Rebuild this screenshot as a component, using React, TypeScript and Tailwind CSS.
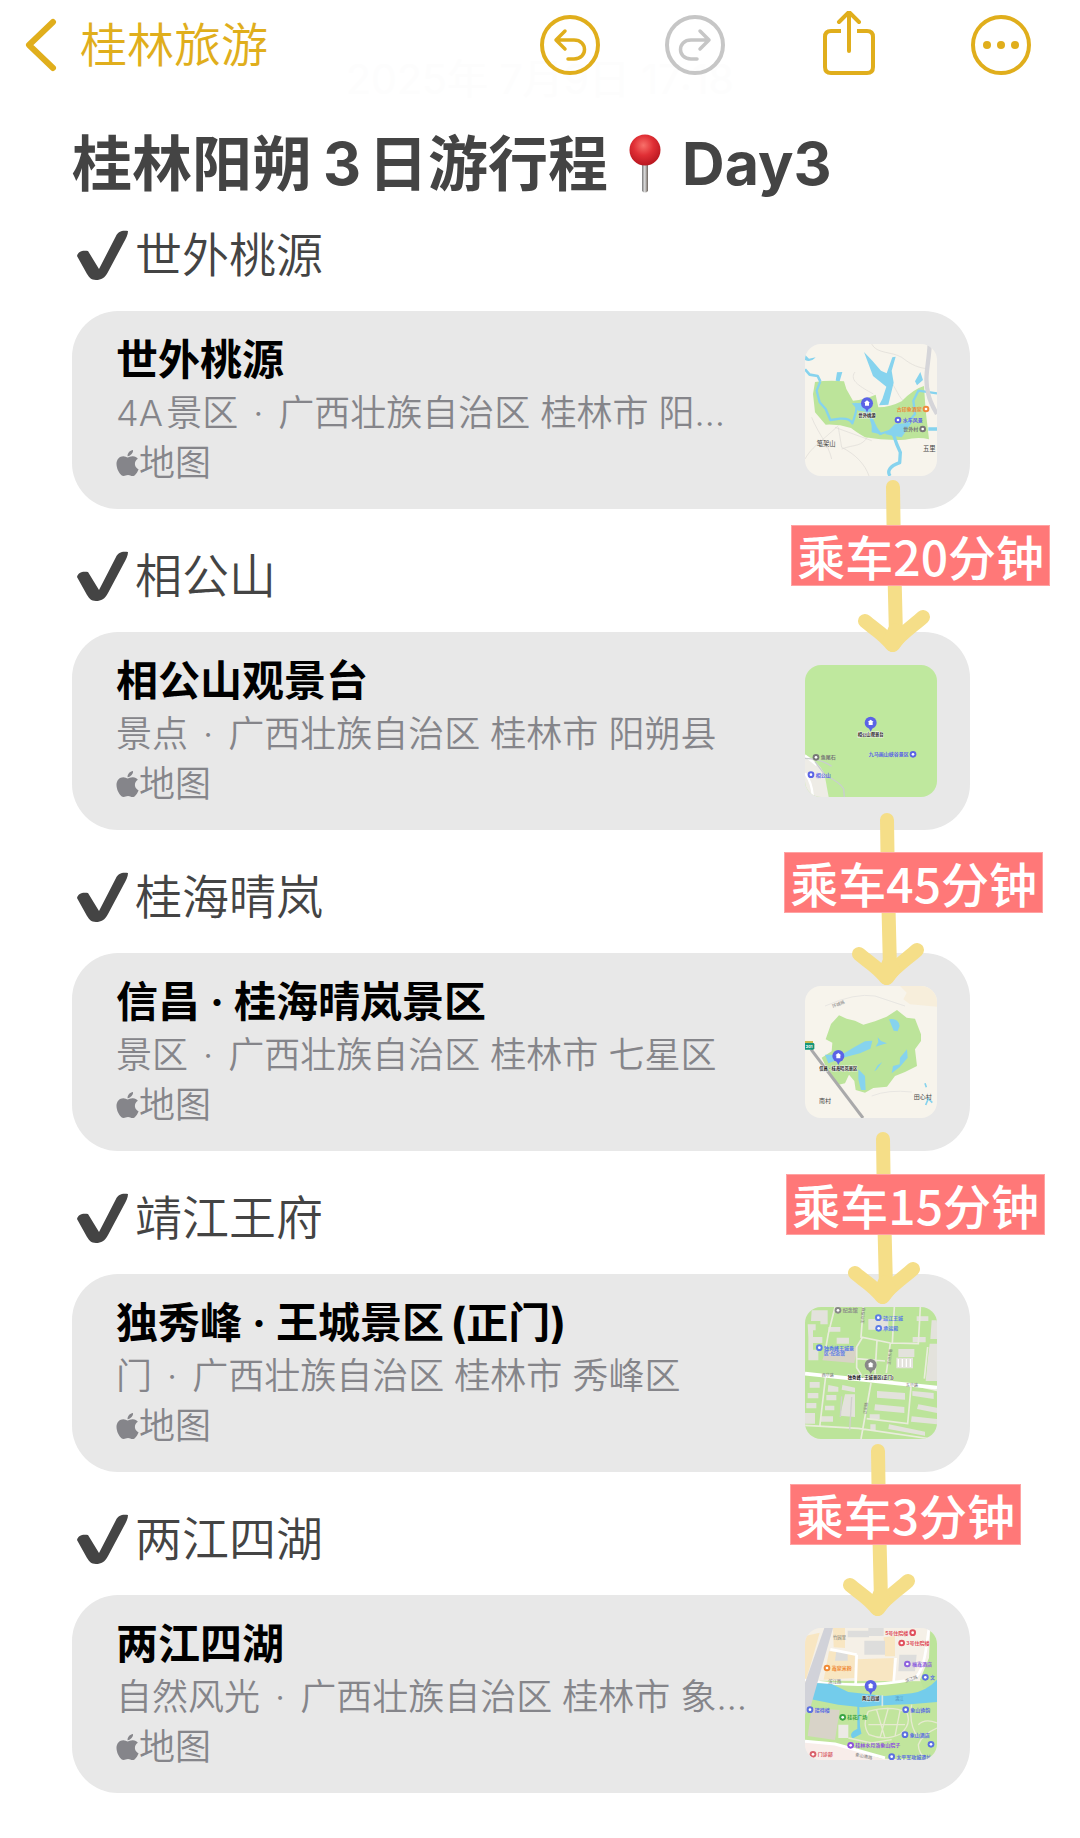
import React from "react";
import { FaApple } from "react-icons/fa";

type Stop = {
  heading: string;
  name: string;
  kind: string;
  place: string;
  map: React.ReactNode;
  ride?: { text: string; arrow: string; label: string };
};

type PinProps = {
  x: number;
  y: number;
  text: string;
  color?: string;
  left?: boolean;
};

// small round place marker with its caption
const Mark = ({ x, y, text, color, left }: PinProps) => (
  <g>
    <circle cx={x} cy={y} r="10" fill={color} />
    <circle cx={x} cy={y} r="4" fill="#fff" />
    <text
      x={left ? x - 13 : x + 14}
      y={y + 6}
      fill={color}
      fontSize="15"
      fontWeight="700"
      textAnchor={left ? "end" : "start"}
    >
      {text}
    </text>
  </g>
);

// large pin in the middle of a map
const Pin = ({ x, y, text, color = "#5b63e6" }: PinProps) => (
  <g>
    <path d={`M${x - 6} ${y + 15}L${x} ${y + 27}L${x + 6} ${y + 15}Z`} fill={color} />
    <circle cx={x} cy={y} r="18" fill={color} />
    <path
      d={`M${x - 9} ${y - 2}L${x} ${y - 9}L${x + 9} ${y - 2}H${x + 6}V${y + 7}H${x - 6}V${y - 2}Z`}
      fill="#fff"
    />
    <text
      x={x}
      y={y + 41}
      fill="#222"
      stroke="#fff"
      strokeWidth="2"
      paintOrder="stroke"
      fontSize="13"
      fontWeight="700"
      textAnchor="middle"
    >
      {text}
    </text>
  </g>
);

const MapFrame = ({ label, children }: { label: string; children: React.ReactNode }) => (
  <svg
    viewBox="0 0 396 396"
    role="img"
    aria-label={label}
    className="size-[132px] shrink-0 rounded-[16px]"
  >
    {children}
  </svg>
);

const TaoyuanMap = () => (
  <MapFrame label="世外桃源">
    <rect width="396" height="396" fill="#f7f4ec" />
    <g fill="none" stroke="#dedbd6" strokeWidth="2">
      <path d="M200 0C215 30 260 22 290 40C310 55 330 70 365 74" />
      <path d="M150 84C130 110 170 130 205 150M255 110C275 135 280 160 300 175" />
      <path d="M0 345C20 310 40 300 100 245M20 220C40 270 70 300 80 345M100 250L110 310C150 330 180 360 192 396M110 315C150 300 170 310 190 275M90 250L200 290" />
    </g>
    <path
      d="M30 114Q70 108 117 112L124 135L144 170Q180 166 212 152L220 190Q255 190 290 172Q325 135 357 126L362 200L372 286Q340 278 300 287Q240 290 180 280Q150 262 138 252Q100 240 62 242L30 205L24 150Z"
      fill="#bce49a"
    />
    <g fill="none" stroke="#86d3ee" strokeLinejoin="round">
      <path d="M0 76L14 92L38 96L46 112" strokeWidth="8" />
      <path d="M46 112L35 140L44 175L62 195L76 228L105 224Q135 222 142 238Q160 190 152 180L175 190L196 220L206 250L225 270L262 258L300 245L330 210L325 170L340 140L396 148" strokeWidth="7" />
      <path d="M262 262L275 300L286 325L284 356Q240 372 255 396" strokeWidth="10" />
      <path d="M370 255H396" strokeWidth="11" />
    </g>
    <path
      d="M177 24L202 50L228 80L245 88L262 40L272 38L260 80L266 116L250 182L222 184L232 165L244 128L204 96Z"
      fill="#86d3ee"
    />
    <path d="M0 32L12 44L32 40Q18 56 0 48ZM96 85L112 84L104 112L92 110ZM346 84L354 108L336 124L330 112ZM140 178L190 176L200 205L160 200ZM200 215L216 250L232 272L200 265ZM240 270L270 240L320 236L290 280L262 275Z" fill="#86d3ee" />
    <path d="M374 0C372 60 356 100 370 150C375 175 390 200 396 210" fill="none" stroke="#d5d5d9" strokeWidth="13" />
    <Pin x={186} y={178} text="世外桃源" />
    <Mark x={363} y={195} text="古印象酒家" color="#ef8a3c" left />
    <Mark x={279} y={228} text="水车风景" color="#5b63e6" />
    <Mark x={353} y={255} text="世外村" color="#777" left />
    <g fill="#444" fontSize="19">
      <text x="35" y="305">笔架山</text>
      <text x="354" y="322">五里</text>
    </g>
  </MapFrame>
);

const XianggongMap = () => (
  <MapFrame label="相公山观景台">
    <rect width="396" height="396" fill="#bfe89e" />
    <path d="M0 268Q40 290 58 325L71 396H0Z" fill="#eeece6" />
    <path d="M0 272L35 300M0 325Q20 350 24 396" stroke="#fff" strokeWidth="7" fill="none" />
    <path d="M0 280Q50 282 80 304M30 290L60 330Q105 352 116 372L118 396" stroke="#c9cdd0" strokeWidth="4" fill="none" />
    <Pin x={197} y={173} text="相公山观景台" />
    <Mark x={324} y={268} text="九马画山峡谷景区" color="#5b63e6" left />
    <Mark x={33} y={277} text="鱼尾石" color="#777" />
    <Mark x={18} y={329} text="相公山" color="#5b63e6" />
  </MapFrame>
);

const GuihaiMap = () => (
  <MapFrame label="桂海晴岚景区">
    <rect width="396" height="396" fill="#f7f4ec" />
    <path d="M285 0H396V62L315 55L295 40L305 20Z" fill="#f7eedb" />
    <path d="M60 60Q150 20 210 30L300 60M200 330Q250 310 320 318" fill="none" stroke="#e8e6e2" strokeWidth="3" />
    <path
      d="M102 88L125 98L150 104L175 116L210 106L245 92L276 72L305 95L330 98L348 145V165L330 190L336 240L300 258L270 270L246 302L205 306L180 320L152 312L148 285L132 266L120 292L95 298L62 240L50 215L80 196L82 170L62 160L78 114Z"
      fill="#bce49a"
    />
    <path
      d="M60 206L110 206L150 182L180 166L202 164L196 188L165 202L125 212L70 232ZM252 100Q280 95 284 120L278 136L266 134ZM218 154L228 165L246 172L230 176L212 182L220 168ZM285 215L306 190L308 215L285 242L260 262L264 240L284 235ZM232 228L214 252L208 256L218 238ZM160 250L180 270L182 312H168L160 280Z"
      fill="#86d3ee"
    />
    <path d="M18 190L174 396" stroke="#a9a9aa" strokeWidth="9" />
    <rect x="-8" y="171" width="36" height="20" rx="4" fill="#159578" />
    <rect x="-8" y="165" width="32" height="6" fill="#c8ba52" />
    <text x="2" y="186" fill="#fff" fontSize="12" fontWeight="700">201</text>
    <path d="M360 292L364 304M362 357L370 338L382 350" stroke="#86d3ee" strokeWidth="5" fill="none" />
    <Pin x={100} y={210} text="信昌 · 桂海晴岚景区" />
    <g fill="#444" fontSize="18">
      <text x="42" y="352">南村</text>
      <text x="326" y="338">田心村</text>
    </g>
    <text x="84" y="66" fill="#888" fontSize="13" transform="rotate(-22 84 66)">环城路</text>
  </MapFrame>
);

const WangfuMap = () => (
  <MapFrame label="独秀峰 · 王城景区 (正门)">
    <rect width="396" height="396" fill="#bce49a" />
    <g fill="#e3e2dc">
      <path d="M20 10H68V52H46V42H18ZM8 52H32V70H24V90H10ZM10 90H52V108H24V128H40V160H10ZM70 60H106V74H70ZM95 92H132V110H95ZM190 36H250V68H190ZM380 40H396V96H376ZM374 110H396V222H362L368 160ZM335 28H370V42H335ZM323 90H362V106H323ZM280 126H328V150H280ZM274 152H324V184H274Z" />
      <path d="M14 225H44V242H14ZM8 258H40V274H8ZM4 288H34V304H4ZM0 318H30V350H0ZM70 234L100 240V254H68ZM64 264H94V280H64ZM60 296H88V310H60ZM112 234L150 242V256L110 248ZM120 262H150V330L105 326ZM216 252L300 258V278L216 272ZM210 292L298 300V318L208 310ZM252 352L360 374V386L250 366ZM322 252L386 258V276L322 266ZM340 292L396 302V318L336 306ZM320 328L396 336V352L318 344ZM194 322H224V336H194ZM196 352H212V370H196ZM48 328H84V344H48Z" />
    </g>
    <path d="M62 130L158 120L148 168L52 160Z" fill="#d8d3c6" />
    <g fill="none" stroke="#e9ecdc" strokeWidth="5">
      <path d="M90 0L70 80L62 125M175 0L168 90L256 108L340 110L346 0M256 108L244 198M268 0L262 108M172 92L155 120V182L170 206M155 155L240 162M216 100L210 200M368 120L358 215M62 208L44 360M198 228L168 396M318 240L308 350L185 335M0 355L160 364L380 396M330 235L396 250" />
    </g>
    <path d="M0 200L396 242" stroke="#fff" strokeWidth="11" />
    <path d="M110 268L106 330M140 270L134 370" stroke="#d0d0cd" strokeWidth="4" />
    <path d="M280 156V180M292 156V180M304 156V180M316 156V180" stroke="#fff" strokeWidth="4" />
    <Mark x={99} y={10} text="纪念馆" color="#888" />
    <Mark x={220} y={32} text="靖江王城" color="#5b7be6" />
    <Mark x={221} y={64} text="承运殿" color="#5b7be6" />
    <Mark x={43} y={122} text="独秀峰王城景" color="#5b7be6" />
    <text x="57" y="143" fill="#5b7be6" fontSize="14" fontWeight="700">区-纪念馆</text>
    <Pin x={197} y={174} text="独秀峰 · 王城景区(正门)" color="#888" />
    <g fill="#777" fontSize="12">
      <text x="50" y="211">西华路</text>
      <text x="303" y="241">东华路</text>
      <text x="176" y="50" transform="rotate(-85 176 50)">王府西巷</text>
      <text x="256" y="174" transform="rotate(-83 256 174)">王府东巷</text>
      <text x="184" y="322" transform="rotate(-83 184 322)">正阳路</text>
    </g>
  </MapFrame>
);

const LakesMap = () => (
  <MapFrame label="两江四湖">
    <rect width="396" height="396" fill="#f5f0e7" />
    <g fill="#f9e3b9">
      <path d="M0 24L44 14L20 100L0 165ZM84 0H120V60L86 58ZM155 94L266 90L264 160L155 166ZM72 70L150 74L148 150L56 155ZM236 28L270 24V85H240Z" opacity=".8" />
    </g>
    <g fill="#dddddc">
      <path d="M128 8H192V28H128ZM178 38H240V80H178ZM283 80H335L330 130H280ZM94 68L128 78V98H90ZM190 0H236V24H190Z" />
    </g>
    <path d="M45 158L396 160V396L160 390L0 340V230Z" fill="#c1e59d" />
    <path d="M376 0H396V180H355L345 155L372 90Z" fill="#bce49a" />
    <path d="M0 156Q80 170 160 170T320 155Q350 145 362 70L372 0M155 80L152 168M76 64L155 80M272 90L266 160" fill="none" stroke="#fff" strokeWidth="8" />
    <path d="M32 165L80 168L130 192L240 204L320 196Q365 188 396 155V222L325 228L230 232L170 238L100 230L18 214Z" fill="#73cceb" />
    <path d="M232 202V235" stroke="#d8e8e5" strokeWidth="5" />
    <path d="M160 234L162 296L166 316L144 328Q134 316 160 304Z" fill="#73cceb" stroke="#73cceb" strokeWidth="6" />
    <path d="M58 0H84L18 232L0 260V165Z" fill="#d1d2d9" />
    <path d="M20 240L104 246L90 336L8 324Z" fill="#d8d3c8" />
    <path d="M100 290H130V330H100Z" fill="#eceae5" />
    <g fill="none" stroke="#e6ead0" strokeWidth="4">
      <path d="M190 250Q260 230 306 254Q320 290 286 318Q240 340 192 320Q170 290 190 250M190 290H300M215 246L240 330M250 240L225 330M285 248L270 325M130 330L200 345L260 335M340 290Q360 270 396 285M396 300Q350 320 340 350Q340 380 370 396M320 230Q310 290 340 330" />
    </g>
    <path d="M0 338L90 346L180 376L240 396H0Z" fill="#f8edea" />
    <path d="M0 340L90 348L240 390" fill="none" stroke="#fff" strokeWidth="9" />
    <Mark x={323} y={14} text="5号住院楼" color="#e0505d" left />
    <Mark x={290} y={45} text="3号住院楼" color="#e0505d" />
    <Mark x={307} y={108} text="福鑫酒店" color="#8e62dd" />
    <Mark x={66} y={120} text="鑫家米粉" color="#f08a35" />
    <Mark x={361} y={148} text="文" color="#5b6fe0" />
    <Mark x={15} y={245} text="接待楼" color="#5b6fe0" />
    <Mark x={302} y={245} text="象山钟韵" color="#5b6fe0" />
    <Mark x={113} y={268} text="桂花广场" color="#3aa443" />
    <Mark x={300} y={320} text="象山酒店" color="#5b6fe0" />
    <Mark x={378} y={349} text="" color="#5b6fe0" />
    <Mark x={137} y={352} text="桂林水月洛象山院子" color="#8e52dd" />
    <Mark x={24} y={379} text="门诊部" color="#d9606a" />
    <Mark x={260} y={386} text="太平军攻城遗址" color="#5b6fe0" />
    <Pin x={197} y={174} text="两江四湖" />
    <g fill="#777" fontSize="13">
      <text x="84" y="32">竹园里</text>
      <text x="70" y="164">滨江路</text>
      <text x="302" y="164" transform="rotate(-20 302 164)">滨江路</text>
      <text x="270" y="217" fill="#4f93bd">漓江</text>
      <text x="150" y="384" transform="rotate(12 150 384)">象山南路</text>
    </g>
  </MapFrame>
);

const stops: Stop[] = [
  {
    heading: "世外桃源",
    name: "世外桃源",
    kind: "4A\u200a景区",
    place: "广西壮族自治区 桂林市 阳…",
    map: <TaoyuanMap />,
    ride: { text: "乘车20分钟", arrow: "right-[40px] top-[169px]", label: "-right-[80px] top-[214px]" },
  },
  {
    heading: "相公山",
    name: "相公山观景台",
    kind: "景点",
    place: "广西壮族自治区 桂林市 阳朔县",
    map: <XianggongMap />,
    ride: { text: "乘车45分钟", arrow: "right-[46px] top-[181px]", label: "-right-[73px] top-[220px]" },
  },
  {
    heading: "桂海晴岚",
    name: "信昌 · 桂海晴岚景区",
    kind: "景区",
    place: "广西壮族自治区 桂林市 七星区",
    map: <GuihaiMap />,
    ride: { text: "乘车15分钟", arrow: "right-[50px] top-[179px]", label: "-right-[75px] top-[221px]" },
  },
  {
    heading: "靖江王府",
    name: "独秀峰 · 王城景区\u2009(正门)",
    kind: "门",
    place: "广西壮族自治区 桂林市 秀峰区",
    map: <WangfuMap />,
    ride: { text: "乘车3分钟", arrow: "right-[55px] top-[170px]", label: "-right-[51px] top-[210px]" },
  },
  {
    heading: "两江四湖",
    name: "两江四湖",
    kind: "自然风光",
    place: "广西壮族自治区 桂林市 象…",
    map: <LakesMap />,
  },
];

const CheckIcon = () => (
  <svg viewBox="0 0 52 50" className="h-[50px] w-[52px] shrink-0" fill="#444" aria-hidden="true">
    <path d="M0 26C1 21 6 20 11 21L22 39L39 6C41 1 46 0 51 1C51 5 49 8 47 12L31 42C28 48 24 50 19 50C14 50 12 47 10 44Z" />
  </svg>
);

const RideArrow = ({ className }: { className: string }) => (
  <svg
    viewBox="0 0 72 174"
    className={`absolute z-10 h-[174px] w-[72px] ${className}`}
    fill="none"
    stroke="#f5de88"
    strokeWidth="14"
    strokeLinecap="round"
    strokeLinejoin="round"
    aria-hidden="true"
  >
    <path d="M35 7L36 75L38 156" />
    <path d="M7 141C16 149 26 154 34 165C44 153 55 146 65 137" />
    <path d="M32 161L37 150L41 157L35 165Z" fill="#f5de88" />
  </svg>
);

const StopCard = ({ stop }: { stop: Stop }) => (
  <section>
    <h2 className="flex h-[69px] items-center gap-[6px] pl-[5px] text-[47px] font-[350] leading-[60px] text-[#444]">
      <CheckIcon />
      {stop.heading}
    </h2>
    <div className="relative mt-[22px]">
      <a
        href="#map"
        className="flex h-[198px] items-center justify-between gap-[40px] rounded-[46px] bg-[#e8e8e8] pl-[44px] pr-[33px]"
      >
        <div className="min-w-0">
          <h3 className="truncate text-[42px] font-bold leading-[56px] text-black">{stop.name}</h3>
          <p className="truncate text-[36px] font-[350] leading-[50px] text-[#85858a]">
            {stop.kind}
            <span className="mx-[15px]">·</span>
            {stop.place}
          </p>
          <p className="flex items-center text-[36px] font-[350] leading-[50px] text-[#85858a]">
            <FaApple className="h-[30px] w-[23px] shrink-0" />
            地图
          </p>
        </div>
        {stop.map}
      </a>
      {stop.ride && (
        <>
          <RideArrow className={stop.ride.arrow} />
          <p
            className={`absolute z-20 whitespace-nowrap border border-[#ffa3a3] bg-[#ff7878] px-[5px] font-['Noto_Sans_CJK_SC',sans-serif] text-[48px] font-medium leading-[59px] text-white ${stop.ride.label}`}
          >
            {stop.ride.text}
          </p>
        </>
      )}
    </div>
  </section>
);

const Header = () => (
  <header className="relative flex items-center pb-[10px] pl-[24px] pr-[49px] pt-[11px] text-[#e0ae1c]">
    <time className="absolute inset-x-0 top-[52px] text-center text-[41px] leading-[54px] text-[#fdfdfd]">
      2025年 7月9日 17:18
    </time>
    <button type="button" className="relative flex items-center gap-[22px] text-[47px] font-[350] leading-[68px]">
      <svg viewBox="0 0 34 54" className="h-[54px] w-[34px]" fill="none" stroke="currentColor" strokeWidth="6" strokeLinecap="round" strokeLinejoin="round" aria-hidden="true">
        <path d="M29 4L5 27L29 50" />
      </svg>
      桂林旅游
    </button>
    <div className="relative ml-auto flex items-center">
      <button type="button" aria-label="撤销" className="mr-[65px]">
        <svg viewBox="0 0 60 60" className="size-[60px]" fill="none" stroke="currentColor" strokeWidth="3.500" strokeLinecap="round" strokeLinejoin="round">
          <circle cx="30" cy="30" r="28" strokeWidth="4" />
          <path d="M25 16L16 25L25 34M16 25H34C48 25 48 44 34 44H28" />
        </svg>
      </button>
      <button type="button" aria-label="重做" disabled className="mr-[94px] text-[#c6c6c6]">
        <svg viewBox="0 0 60 60" className="size-[60px]" fill="none" stroke="currentColor" strokeWidth="3.500" strokeLinecap="round" strokeLinejoin="round">
          <circle cx="30" cy="30" r="28" strokeWidth="4" />
          <path d="M35 16L44 25L35 34M44 25H26C12 25 12 44 26 44H32" />
        </svg>
      </button>
      <button type="button" aria-label="分享" className="mr-[92px]">
        <svg viewBox="0 0 60 68" className="h-[68px] w-[60px]" fill="none" stroke="currentColor" strokeWidth="4" strokeLinecap="round" strokeLinejoin="round">
          <path d="M22 20H12Q6 20 6 26V56Q6 62 12 62H48Q54 62 54 56V26Q54 20 48 20H38" strokeLinecap="butt" />
          <path d="M30 40V2M20 11L30 1L40 11" />
        </svg>
      </button>
      <button type="button" aria-label="更多">
        <svg viewBox="0 0 60 60" className="size-[60px]" fill="currentColor">
          <circle cx="30" cy="30" r="28" fill="none" stroke="currentColor" strokeWidth="4" />
          <circle cx="16" cy="30" r="4" />
          <circle cx="30" cy="30" r="4" />
          <circle cx="44" cy="30" r="4" />
        </svg>
      </button>
    </div>
  </header>
);

const PushpinIcon = () => (
  <svg viewBox="0 0 32 60" className="mx-[21px] h-[60px] w-[32px]" role="img" aria-label="图钉">
    <defs>
      <radialGradient id="pinHead" cx="0.450" cy="0.350" r="0.650">
        <stop offset="0" stopColor="#f8706a" />
        <stop offset="0.500" stopColor="#e02f35" />
        <stop offset="1" stopColor="#b8161f" />
      </radialGradient>
      <linearGradient id="pinNeedle">
        <stop offset="0" stopColor="#777" />
        <stop offset="0.450" stopColor="#ddd" />
        <stop offset="1" stopColor="#6b625b" />
      </linearGradient>
    </defs>
    <path d="M13 29H19V57Q16 60 13 57Z" fill="url(#pinNeedle)" />
    <circle cx="16" cy="16" r="15.500" fill="url(#pinHead)" />
  </svg>
);

const App = () => {
  return (
    <div className="min-h-screen bg-white pb-[45px] font-['Inter','Noto_Sans_CJK_SC',sans-serif]">
      <Header />
      <main className="pl-[72px] pr-[110px]">
        <h1 className="flex h-[131px] items-center whitespace-nowrap pt-[18px] text-[60px] font-bold leading-[80px] text-[#444]">
          桂林阳朔
          <span className="ml-[11px] mr-[7px] text-[59px]">3</span>
          日游行程
          <PushpinIcon />
          <span className="text-[59px]">Day3</span>
        </h1>
        <div className="flex flex-col gap-[32px]">
          {stops.map((stop) => (
            <StopCard key={stop.heading} stop={stop} />
          ))}
        </div>
      </main>
    </div>
  );
};

export default App;
